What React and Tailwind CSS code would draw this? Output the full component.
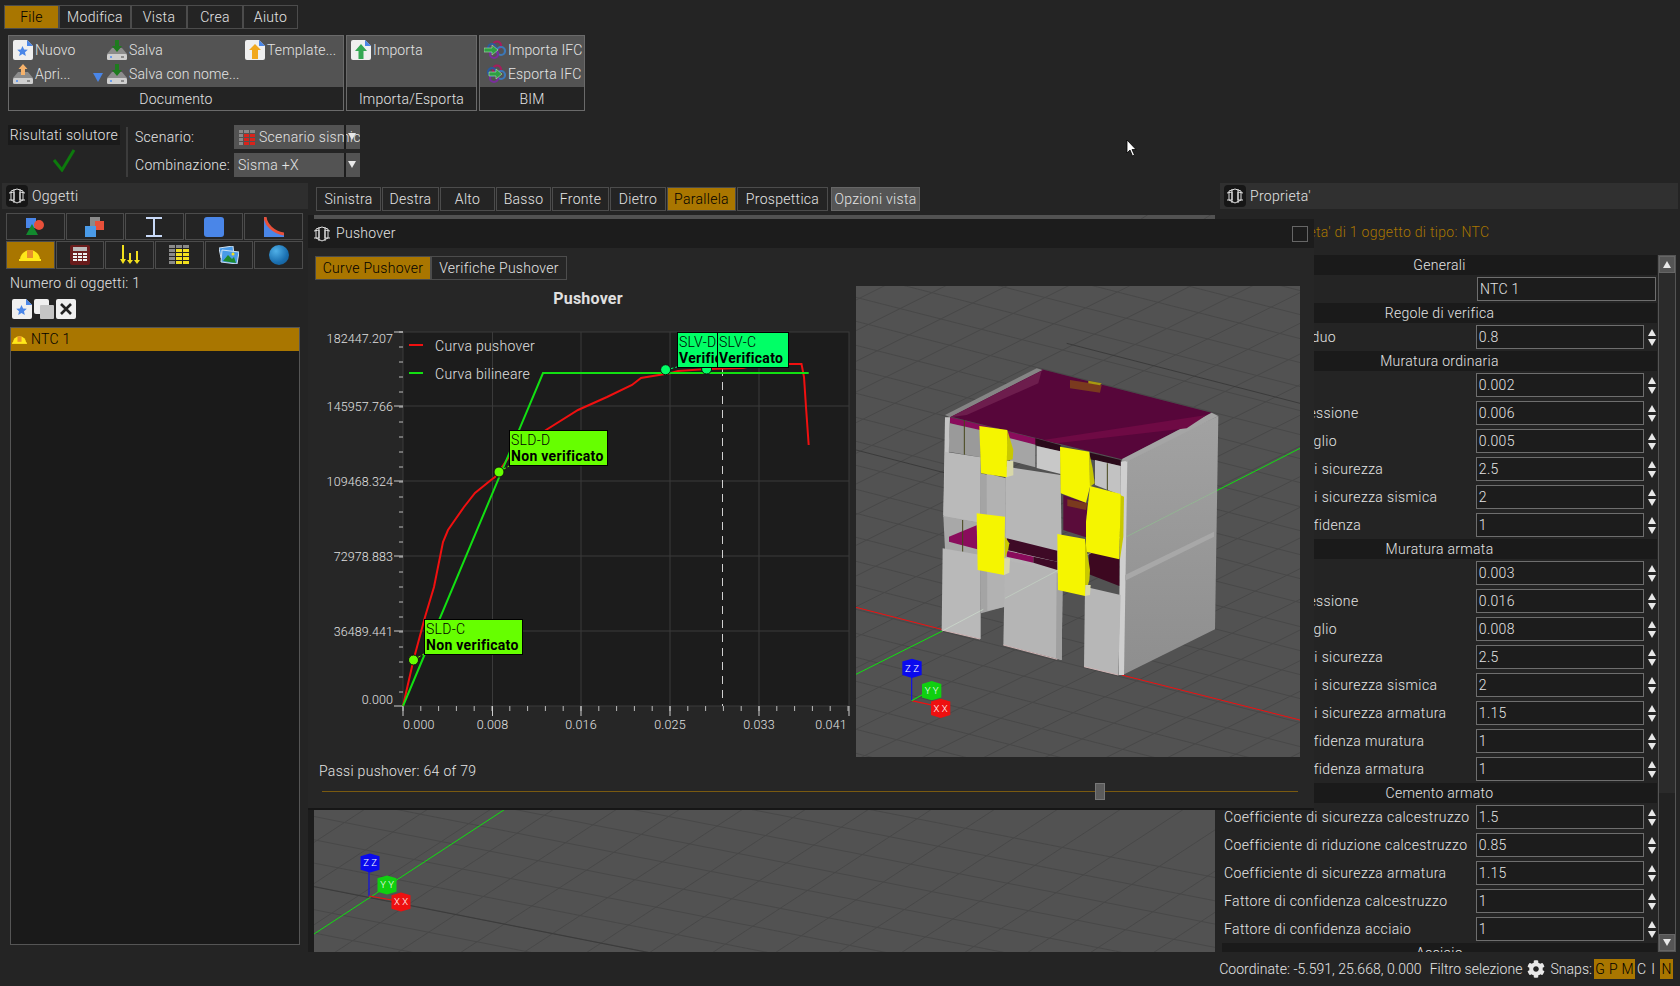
import React from "react";
import { FaCog } from "react-icons/fa";

const amber = "bg-[#a97600]";

const PanelIcon = () => (
  <div className="w-[22px] h-[22px] rounded-[4px] bg-[#161616] flex items-center justify-center shrink-0">
    <svg width="18" height="18" viewBox="0 0 18 18" fill="none" stroke="#e0e0e0" strokeWidth="1">
      <path d="M3 4l6-2 6 2v9l-6 3-6-3z" />
      <path d="M1 6l5-1v8l-5 0M17 6l-5-1v8l5 0M6 2v14M12 2v14" />
    </svg>
  </div>
);

const Doc = ({ children, corner = "#4a86e8" }) => (
  <svg width="20" height="20" viewBox="0 0 20 20" className="shrink-0">
    <path d="M2 0h12l6 6v12a2 2 0 0 1-2 2H2a2 2 0 0 1-2-2V2a2 2 0 0 1 2-2z" fill="#efefef" />
    <path d="M14 0l6 6h-6z" fill={corner} />
    {children}
  </svg>
);

const Drive = ({ arrow, up }) => (
  <svg width="20" height="20" viewBox="0 0 20 20" className="shrink-0">
    <path d="M5 8h10l5 6v4a2 2 0 0 1-2 2H2a2 2 0 0 1-2-2v-4z" fill="#8c8c8c" />
    <rect x="0" y="14" width="20" height="6" rx="1.5" fill="#cfcfcf" />
    <rect x="3" y="16" width="2" height="2" fill="#6d9eeb" />
    <rect x="14" y="16" width="3" height="2" fill="#8a8a8a" />
    {up ? (
      <path d="M10 0l4.5 5H12v6H8V5H5.5z" fill={arrow} />
    ) : (
      <path d="M8 0h4v6h3l-5 6-5-6h3z" fill={arrow} />
    )}
  </svg>
);

const IfcIcon = ({ flip }) => (
  <svg width="22" height="20" viewBox="0 0 22 20" fill="none" className="shrink-0">
    <circle cx="13" cy="5.5" r="4" stroke="#a61c5c" strokeWidth="2.2" />
    <circle cx="17" cy="11" r="4" stroke="#3c78b8" strokeWidth="2.2" />
    <circle cx="10" cy="14" r="4" stroke="#7a2d9c" strokeWidth="2.2" />
    <circle cx="8" cy="8" r="4" stroke="#2a5a9c" strokeWidth="2.2" />
    <path d={flip ? "M5 8h7V5l6 5-6 5v-3H5z" : "M0 8h8V5l6 5-6 5v-3H0z"} fill="#2ea043" stroke="#cfe8cf" strokeWidth=".5" />
  </svg>
);

const Tool = ({ icon, label, w }) => (
  <div className={`flex items-center gap-[2px] h-[24px] tracking-[0.15px] ${w}`}>
    {icon}
    <span className="whitespace-nowrap">{label}</span>
  </div>
);

const Group = ({ title, w, children }) => (
  <div className={`${w} h-[76px] flex flex-col border border-[#6a6a6a] bg-[#535353]`}>
    <div className="h-[54px] relative">{children}</div>
    <div className="flex-1 bg-[#232323] flex items-center justify-center pt-[2px] tracking-[0.2px]">{title}</div>
  </div>
);

const Ribbon = () => (
  <div className="flex gap-[2px] ml-[8px] mt-[6px]">
    <Group title="Documento" w="w-[336px]">
      <div className="flex pl-[4px] pt-[2px]">
        <div className="w-[94px] flex flex-col">
          <Tool
            label="Nuovo"
            icon={
              <Doc>
                <path d="M9.5 6l1.6 3.4 3.7.4-2.8 2.5.8 3.7-3.3-1.9-3.3 1.9.8-3.7-2.8-2.5 3.7-.4z" fill="#4a86e8" />
              </Doc>
            }
          />
          <Tool label="Apri..." icon={<Drive arrow="#f6b26b" up />} />
        </div>
        <div className="w-[138px] flex flex-col">
          <Tool label="Salva" icon={<Drive arrow="#1e7b1e" />} />
          <div className="relative">
            <Tool label="Salva con nome..." icon={<Drive arrow="#1e7b1e" />} />
            <div className="absolute left-[-14px] top-[11px] w-0 h-0 border-l-[5px] border-r-[5px] border-t-[9px] border-l-transparent border-r-transparent border-t-[#4a86e8]" />
          </div>
        </div>
        <Tool
          label="Template..."
          icon={
            <Doc>
              <path d="M10 4l6 6h-3v9H7v-9H4z" fill="#f1a81e" />
            </Doc>
          }
        />
      </div>
    </Group>
    <Group title="Importa/Esporta" w="w-[131px]">
      <div className="pl-[4px] pt-[2px]">
        <Tool
          label="Importa"
          icon={
            <Doc>
              <path d="M10 4l6 7h-3.5v8h-5v-8H4z" fill="#34a853" />
            </Doc>
          }
        />
      </div>
    </Group>
    <Group title="BIM" w="w-[106px]">
      <div className="pl-[4px] pt-[2px]">
        <Tool label="Importa IFC" icon={<IfcIcon />} />
        <Tool label="Esporta IFC" icon={<IfcIcon flip />} />
      </div>
    </Group>
  </div>
);

const Combo = ({ icon, label }) => (
  <div className="relative w-[126px] h-[24px] bg-[#535353] flex items-center overflow-hidden whitespace-nowrap gap-[3px] pl-[4px]">
    {icon}
    {label}
    <div className="absolute left-[110px] top-0 w-[2px] h-full bg-[#1c1c1c]" />
    <div className="absolute left-[114px] top-[8px] w-0 h-0 border-l-[4px] border-r-[4px] border-t-[7px] border-l-transparent border-r-transparent border-t-[#e8e8e8]" />
  </div>
);

const TableIcon = ({ color = "#d8241c" }) => (
  <svg width="18" height="18" viewBox="0 0 18 18" className="shrink-0">
    {[0, 4, 8, 12].map((y) => (
      <g key={y}>
        <rect x="1" y={y + 2} width="4" height="3" fill="#8a8a8a" />
        <rect x="6" y={y + 2} width="5" height="3" fill={y ? color : "#8a8a8a"} />
        <rect x="12" y={y + 2} width="5" height="3" fill={y ? color : "#8a8a8a"} />
      </g>
    ))}
  </svg>
);

const ResultsRow = () => (
  <div className="flex mt-[14px] h-[52px] ml-[8px]">
    <div className="w-[112px] flex flex-col items-center">
      <div className="w-full h-[20px] bg-[#1a1a1a] flex items-center justify-center whitespace-nowrap">Risultati solutore</div>
      <svg width="24" height="24" viewBox="0 0 24 24" className="mt-[3px]" fill="none" stroke="#0d7a0d" strokeWidth="3">
        <path d="M2 12l8 10L22 2" />
      </svg>
    </div>
    <div className="w-[2px] bg-[#3c3c3c] ml-[6px] mr-[7px] mt-[2px]" />
    <div className="flex flex-col gap-[4px]">
      <div className="flex items-center">
        <span className="w-[99px]">Scenario:</span>
        <Combo icon={<TableIcon />} label="Scenario sismico" />
      </div>
      <div className="flex items-center">
        <span className="w-[99px]">Combinazione:</span>
        <Combo label="Sisma +X" />
      </div>
    </div>
  </div>
);

const Header = () => (
  <div className="h-[183px] flex flex-col pt-[5px]">
    <div className="flex ml-[4px] h-[24px]">
      {[
        ["File", "w-[55px]"],
        ["Modifica", "w-[72px]"],
        ["Vista", "w-[56px]"],
        ["Crea", "w-[56px]"],
        ["Aiuto", "w-[55px]"],
      ].map(([t, w], i) => (
        <div
          key={t}
          className={`${w} flex items-center justify-center border border-[#4c4c4c] ${i === 0 ? `${amber} text-black` : ""}`}
        >
          {t}
        </div>
      ))}
    </div>
    <Ribbon />
    <ResultsRow />
  </div>
);

const HardHat = ({ w = 22 }) => (
  <svg width={w} height={(w * 14) / 22} viewBox="0 0 22 14">
    <path d="M1 12a10 10 0 0 1 20 0z" fill="#ffe81a" />
    <rect x="8" y="2" width="6" height="8" fill="#e8912a" />
    <rect x="0" y="11" width="22" height="2" fill="#ffe81a" />
  </svg>
);

const TopIcons = [
  <svg key="a" width="20" height="20" viewBox="0 0 20 20">
    <rect x="1" y="1" width="10" height="10" fill="#4a86e8" />
    <circle cx="14" cy="8" r="5" fill="#e8503a" />
    <path d="M7 7l6 11H1z" fill="#128a2e" />
  </svg>,
  <svg key="b" width="22" height="22" viewBox="0 0 22 22">
    <rect x="6" y="1" width="10" height="10" fill="#8a8a8a" />
    <rect x="11" y="5" width="9" height="9" fill="#e8503a" />
    <rect x="1" y="10" width="11" height="11" fill="#4a9be8" />
  </svg>,
  <svg key="c" width="18" height="22" viewBox="0 0 18 22" fill="none" stroke="#c9daf8" strokeWidth="2">
    <path d="M1 2h16M1 20h16M9 2v18" />
  </svg>,
  <div key="d" className="w-[20px] h-[20px] rounded-[3px] bg-[#4a86e8]" />,
  <svg key="e" width="20" height="20" viewBox="0 0 20 20">
    <path d="M0 0v20h20v-3C10 16 4 10 2 0z" fill="#4a86e8" />
    <path d="M1 0c1 8 8 15 19 17" fill="none" stroke="#e8503a" strokeWidth="3" />
  </svg>,
];

const BottomIcons = [
  <HardHat key="a" />,
  <svg key="b" width="20" height="20" viewBox="0 0 20 20">
    <rect width="20" height="20" rx="2" fill="#6a1c1c" />
    <rect x="3" y="2" width="14" height="4" fill="#bbb" />
    {[8, 11, 14].map((y) =>
      [3, 8, 13].map((x) => <rect key={`${x}${y}`} x={x} y={y} width="4" height="2" fill="#eee" />)
    )}
  </svg>,
  <svg key="c" width="20" height="20" viewBox="0 0 20 20" fill="none" stroke="#f2e01e" strokeWidth="2">
    <path d="M3 0v16M10 8v9M17 6v11" />
    <path d="M0 14l3 5 3-5zM7 15l3 4 3-4zM14 15l3 4 3-4z" fill="#f2e01e" stroke="none" />
  </svg>,
  <svg key="d" width="20" height="20" viewBox="0 0 20 20">
    {[0, 4, 8, 12, 16].map((y) => (
      <g key={y}>
        <rect x="0" y={y} width="6" height="3" fill="#8a8a8a" />
        <rect x="7" y={y} width="6" height="3" fill={y > 2 ? "#f2e01e" : "#8a8a8a"} />
        <rect x="14" y={y} width="6" height="3" fill={y > 2 ? "#f2e01e" : "#8a8a8a"} />
      </g>
    ))}
  </svg>,
  <svg key="e" width="20" height="18" viewBox="0 0 20 18">
    <path d="M0 2l14-2 1 10-13 2z" fill="#4a9be8" stroke="#cfe2f3" />
    <path d="M3 4l17 2-2 12-16-2z" fill="#4a9be8" stroke="#cfe2f3" />
    <path d="M4 15l5-6 4 4 2-2 2 6z" fill="#1e8a2e" />
    <circle cx="14" cy="8" r="1.5" fill="#f2e01e" />
  </svg>,
  <div
    key="f"
    className="w-[20px] h-[20px] rounded-full bg-[radial-gradient(circle_at_35%_30%,#4fb0e8,#1a6fb0_60%,#12558a)]"
  />,
];

const LeftPanel = () => (
  <div className="w-[306px] ml-[2px] flex flex-col">
    <div className="h-[26px] bg-[#2e2e2e] flex items-center gap-[4px] pl-[4px]">
      <PanelIcon />
      Oggetti
    </div>
    <div className="flex gap-px mt-[4px] ml-[4px] h-[27px] w-[297px]">
      {TopIcons.map((ic, i) => (
        <div key={i} className="flex-1 border border-[#4c4c4c] flex items-center justify-center">
          {ic}
        </div>
      ))}
    </div>
    <div className="flex gap-px mt-px ml-[4px] h-[28px] w-[297px]">
      {BottomIcons.map((ic, i) => (
        <div
          key={i}
          className={`flex-1 border border-[#4c4c4c] flex items-center justify-center ${i === 0 ? amber : ""}`}
        >
          {ic}
        </div>
      ))}
    </div>
    <div className="h-[20px] mt-[4px] ml-[8px] flex items-center">Numero di oggetti: 1</div>
    <div className="flex gap-[2px] mt-[6px] ml-[10px]">
      <Doc>
        <path d="M9.5 6l1.6 3.4 3.7.4-2.8 2.5.8 3.7-3.3-1.9-3.3 1.9.8-3.7-2.8-2.5 3.7-.4z" fill="#4a86e8" />
      </Doc>
      <div className="w-[20px] h-[20px] relative">
        <div className="absolute left-0 top-0 w-[15px] h-[15px] rounded-[2px] bg-[#efefef]" />
        <div className="absolute left-[6px] top-[6px] w-[14px] h-[14px] rounded-[1px] bg-[#c4c4c4]" />
      </div>
      <div className="w-[20px] h-[20px] rounded-[2px] bg-[#efefef] flex items-center justify-center">
        <svg width="14" height="14" viewBox="0 0 14 14" stroke="#222" strokeWidth="2.6">
          <path d="M2 2l10 10M12 2L2 12" />
        </svg>
      </div>
    </div>
    <div className="mt-[8px] ml-[8px] w-[290px] h-[618px] border border-[#555] bg-[#1a1a1a]">
      <div className={`${amber} h-[23px] flex items-center gap-[4px] text-black pl-px`}>
        <HardHat w={15} />
        NTC 1
      </div>
    </div>
  </div>
);

const Gizmo = ({ x, y, fill, letter, s = 9.5 }) => (
  <g>
    <polygon
      points={`${x - s},${y - s * 0.7} ${x},${y - s} ${x + s},${y - s * 0.7} ${x + s},${y + s * 0.7} ${x},${y + s} ${x - s},${y + s * 0.7}`}
      fill={fill}
    />
    <text
      x={x}
      y={y + s * 0.35}
      textAnchor="middle"
      fontSize={s}
      fill="#fff"
      fontFamily="Roboto, sans-serif"
      fontWeight="300"
      letterSpacing="0"
    >
      {letter} {letter}
    </text>
  </g>
);

// righe di griglia su un rettangolo: famiglie parallele con pendenza fissa
const gridLines = (x0, x1, slope, yAtX0, step, count) =>
  Array.from({ length: count }, (_, i) => {
    const y = yAtX0 + i * step;
    return { x1: x0, y1: y, x2: x1, y2: y + (x1 - x0) * slope };
  });

const Viewport = () => (
  <svg viewBox="314 215 901 737" width="901" height="737" className="block bg-[#525252]">
    {gridLines(314, 1215, 0.197, 700, 23.3, 14).map((l, i) => (
      <line key={i} {...l} stroke="#484848" />
    ))}
    {gridLines(314, 1215, -0.654, 760, 41.2, 30).map((l, i) => (
      <line key={i} {...l} stroke="#484848" />
    ))}
    <line x1="314" y1="886.7" x2="1215" y2="1064" stroke="#3b3b3b" />
    <line x1="314" y1="934" x2="640" y2="721" stroke="#10e010" />
    <line x1="369" y1="896" x2="369" y2="870" stroke="#1010e8" strokeWidth="1.2" />
    <line x1="369" y1="896" x2="392" y2="900" stroke="#f01010" strokeWidth="1.2" />
    <Gizmo x={370} y={863} fill="#0a0aee" letter="Z" />
    <Gizmo x={387} y={885} fill="#10d010" letter="Y" />
    <Gizmo x={401} y={902} fill="#ee1010" letter="X" />
  </svg>
);

const CenterPanel = () => (
  <div className="w-[907px] flex flex-col">
    <div className="flex gap-px pt-[4px] pl-[8px] h-[28px]">
      {[
        ["Sinistra", "w-[65px]"],
        ["Destra", "w-[57px]"],
        ["Alto", "w-[55px]"],
        ["Basso", "w-[55px]"],
        ["Fronte", "w-[57px]"],
        ["Dietro", "w-[56px]"],
        ["Parallela", "w-[69px]"],
        ["Prospettica", "w-[91px]"],
      ].map(([t, w]) => (
        <div
          key={t}
          className={`${w} flex items-center justify-center border border-[#4c4c4c] ${t === "Parallela" ? `${amber} text-black` : ""}`}
        >
          {t}
        </div>
      ))}
      <div className="w-[89px] ml-[2px] bg-[#555] border border-[#666] flex items-center justify-center">Opzioni vista</div>
    </div>
    <div className="flex-1 mt-[4px] flex bg-[#1c1c1c] pl-[6px]">
      <Viewport />
    </div>
  </div>
);

const sections = [
  { title: "Generali", rows: [["Nome", "NTC 1", true]] },
  { title: "Regole di verifica", rows: [["Rapporto residuo", "0.8"]] },
  {
    title: "Muratura ordinaria",
    rows: [
      ["Drift", "0.002"],
      ["Drift pressoflessione", "0.006"],
      ["Drift ultimo taglio", "0.005"],
      ["Coefficiente di sicurezza", "2.5"],
      ["Coefficiente di sicurezza sismica", "2"],
      ["Fattore di confidenza", "1"],
    ],
  },
  {
    title: "Muratura armata",
    rows: [
      ["Drift", "0.003"],
      ["Drift pressoflessione", "0.016"],
      ["Drift ultimo taglio", "0.008"],
      ["Coefficiente di sicurezza", "2.5"],
      ["Coefficiente di sicurezza sismica", "2"],
      ["Coefficiente di sicurezza armatura", "1.15"],
      ["Fattore di confidenza muratura", "1"],
      ["Fattore di confidenza armatura", "1"],
    ],
  },
  {
    title: "Cemento armato",
    rows: [
      ["Coefficiente di sicurezza calcestruzzo", "1.5"],
      ["Coefficiente di riduzione calcestruzzo", "0.85"],
      ["Coefficiente di sicurezza armatura", "1.15"],
      ["Fattore di confidenza calcestruzzo", "1"],
      ["Fattore di confidenza acciaio", "1"],
    ],
  },
  { title: "Acciaio", rows: [] },
];

const Spinner = () => (
  <div className="w-[11px] flex flex-col items-center gap-[3px] ml-[2px]">
    <div className="w-0 h-0 border-l-[4px] border-r-[4px] border-b-[7px] border-l-transparent border-r-transparent border-b-[#e8e8e8]" />
    <div className="w-0 h-0 border-l-[4px] border-r-[4px] border-t-[7px] border-l-transparent border-r-transparent border-t-[#e8e8e8]" />
  </div>
);

const PropRow = ({ label, value, plain }) => (
  <div className="h-[28px] flex items-center shrink-0">
    <div className="w-[255px] pl-[2px] whitespace-nowrap overflow-hidden tracking-[0.39px]">{label}</div>
    <div
      className={`${plain ? "w-[179px]" : "w-[169px]"} h-[24px] border border-[#6e6e6e] bg-[#1c1c1c] flex items-center pl-[2px]`}
    >
      {value}
    </div>
    {!plain && <Spinner />}
  </div>
);

const ScrollButton = ({ up }) => (
  <div className="h-[17px] bg-[#555] border border-[#666] flex items-center justify-center shrink-0">
    <div
      className={
        up
          ? "w-0 h-0 border-l-[4px] border-r-[4px] border-b-[7px] border-l-transparent border-r-transparent border-b-[#e8e8e8]"
          : "w-0 h-0 border-l-[4px] border-r-[4px] border-t-[7px] border-l-transparent border-r-transparent border-t-[#e8e8e8]"
      }
    />
  </div>
);

const RightPanel = () => (
  <div className="w-[458px] ml-[5px] flex flex-col">
    <div className="h-[26px] bg-[#303030] flex items-center gap-[4px] pl-[4px]">
      <PanelIcon />
      Proprieta'
    </div>
    <div className="h-[46px] flex items-center pl-[50px] text-[#a97600] whitespace-nowrap">
      Proprieta' di 1 oggetto di tipo: NTC
    </div>
    <div className="flex h-[697px] overflow-hidden">
      <div className="w-[435px] ml-[2px] flex flex-col overflow-hidden">
        {sections.map((s) => (
          <div key={s.title} className="flex flex-col shrink-0">
            <div className="h-[20px] bg-[#1a1a1a] flex items-center justify-center">{s.title}</div>
            {s.rows.map(([l, v, plain]) => (
              <PropRow key={l} label={l} value={v} plain={plain} />
            ))}
          </div>
        ))}
      </div>
      <div className="w-[18px] ml-px flex flex-col border border-[#555]">
        <ScrollButton up />
        <div className="h-[520px] bg-[#2b2b2b]" />
        <div className="flex-1 bg-[#222]" />
        <ScrollButton />
      </div>
    </div>
  </div>
);

const yLabels = [
  ["182447.207", 338],
  ["145957.766", 406],
  ["109468.324", 481],
  ["72978.883", 556],
  ["36489.441", 631],
  ["0.000", 699],
];

const xGrid = [492.5, 581, 670, 759];
const yGrid = [406, 481, 556, 631];

const redCurve =
  "403,706 413.5,660 425,617 434,587 443,542 448,530 453.5,522 464,507 475,493 491,480 495,477 509,457 546,430 578,410 607,397 632,385 641,378 671,373 678,371 707,369 743,368 760,364 789,364 801.5,364 804,377 806,407 808.7,445";

const Callout = ({ left, top, width, bg, title, status }) => (
  <div
    style={{ left: left - 316, top: top - 286, width }}
    className={`absolute h-[36px] border border-black ${bg} text-black leading-[16px] pl-[1px] overflow-hidden whitespace-nowrap flex flex-col justify-center`}
  >
    <span>{title}</span>
    <span className="font-bold">{status}</span>
  </div>
);

const Chart = () => {
  const minorY = [];
  for (let y = 332; y <= 706; y += 15) minorY.push(y);
  const minorX = [];
  for (let x = 403; x <= 849; x += 17.8) minorX.push(x);
  return (
    <div className="w-[540px] h-[471px] relative shrink-0">
      <svg viewBox="316 286 540 471" width="540" height="471" className="block">
        <text x="588" y="304" textAnchor="middle" fontSize="16" fontWeight="700" fill="#e0e0e0" letterSpacing=".2">
          Pushover
        </text>
        <rect x="403" y="332" width="446" height="374" fill="#1c1c1c" stroke="#3a3a3a" />
        {xGrid.map((x) => (
          <line key={x} x1={x} x2={x} y1="332" y2="706" stroke="#3a3a3a" />
        ))}
        {yGrid.map((y) => (
          <line key={y} x1="403" x2="849" y1={y} y2={y} stroke="#3a3a3a" />
        ))}
        {minorY.map((y) => (
          <line key={y} x1="399" x2="403" y1={y} y2={y} stroke="#bbb" />
        ))}
        {[332, 406, 481, 556, 631, 706].map((y) => (
          <line key={y} x1="394" x2="403" y1={y} y2={y} stroke="#ccc" />
        ))}
        {minorX.map((x) => (
          <line key={x} x1={x} x2={x} y1="706" y2="711" stroke="#bbb" />
        ))}
        {[403, 492.5, 581, 670, 759, 849].map((x) => (
          <line key={x} x1={x} x2={x} y1="706" y2="716" stroke="#ccc" />
        ))}
        {yLabels.map(([t, y]) => (
          <text key={t} x="393" y={y + 5} textAnchor="end" fontSize="12.5" fontWeight="300" fill="#e0e0e0" letterSpacing=".1">
            {t}
          </text>
        ))}
        {[
          ["0.000", 403, "start"],
          ["0.008", 492.5, "middle"],
          ["0.016", 581, "middle"],
          ["0.025", 670, "middle"],
          ["0.033", 759, "middle"],
          ["0.041", 847, "end"],
        ].map(([t, x, a]) => (
          <text key={t} x={x} y="729" textAnchor={a} fontSize="12.5" fontWeight="300" fill="#e0e0e0" letterSpacing=".2">
            {t}
          </text>
        ))}
        <line x1="722.5" x2="722.5" y1="368" y2="706" stroke="#d0d0d0" strokeDasharray="8 6" />
        <polyline points={redCurve} fill="none" stroke="#f01010" strokeWidth="2" />
        <polyline points="403,706 543,373 808.7,373" fill="none" stroke="#12e012" strokeWidth="2" />
        <line x1="409" x2="423" y1="345" y2="345" stroke="#f01010" strokeWidth="2" />
        <line x1="409" x2="423" y1="373" y2="373" stroke="#12e012" strokeWidth="2" />
        <text x="435" y="351" fontSize="14" fontWeight="300" fill="#e0e0e0">
          Curva pushover
        </text>
        <text x="435" y="379" fontSize="14" fontWeight="300" fill="#e0e0e0">
          Curva bilineare
        </text>
        <line x1="413.5" y1="660" x2="424" y2="654" stroke="#66ff00" strokeDasharray="3 2" />
        <line x1="499" y1="472" x2="509" y2="466" stroke="#66ff00" strokeDasharray="3 2" />
        <line x1="665.6" y1="370" x2="677" y2="367" stroke="#00ff66" strokeDasharray="3 2" />
        {[
          [413.5, 660, "#66ff00"],
          [499, 472, "#66ff00"],
          [665.6, 369.7, "#00ff66"],
          [706.6, 369, "#00ff66"],
        ].map(([x, y, c]) => (
          <circle key={x} cx={x} cy={y} r="5" fill={c} stroke="#111" />
        ))}
      </svg>
      <Callout left={424} top={619} width={99} bg="bg-[#66ff00]" title="SLD-C" status="Non verificato" />
      <Callout left={509} top={430} width={99} bg="bg-[#66ff00]" title="SLD-D" status="Non verificato" />
      <Callout left={677} top={332} width={41} bg="bg-[#00ff66]" title="SLV-D" status="Verificato" />
      <Callout left={717} top={332} width={72} bg="bg-[#00ff66]" title="SLV-C" status="Verificato" />
    </div>
  );
};

const Building3D = () => (
  <svg viewBox="18 -162 1332 1413" width="444" height="471" className="block bg-[#525252] shrink-0">
    <defs>
      <linearGradient id="wall" x1="0" y1="0" x2="0" y2="1">
        <stop offset="0" stopColor="#a2a2a2" />
        <stop offset="1" stopColor="#8e8e8e" />
      </linearGradient>
    </defs>
    {gridLines(18, 1350, 0.255, -560, 72, 30).map((l, i) => (
      <line key={i} {...l} stroke="#484848" strokeWidth="3" />
    ))}
    {gridLines(18, 1350, -0.5, -120, 92, 28).map((l, i) => (
      <line key={i} {...l} stroke="#484848" strokeWidth="3" />
    ))}
    <line x1="18" y1="330" x2="290" y2="400" stroke="#3b3b3b" strokeWidth="3" />
    <line x1="650" y1="10" x2="1350" y2="190" stroke="#3b3b3b" strokeWidth="3" />
    <line x1="18" y1="802" x2="275" y2="868" stroke="#f01010" strokeWidth="3" />
    <line x1="815" y1="1005" x2="1350" y2="1140" stroke="#f01010" strokeWidth="3" />
    <line x1="18" y1="1003" x2="277" y2="873" stroke="#10e010" strokeWidth="3" />
    <line x1="1100" y1="452" x2="1350" y2="325" stroke="#10e010" strokeWidth="3" />

    {/* parete destra */}
    <polygon points="815,360 1105,228 1095,868 818,1005" fill="url(#wall)" />
    <polygon points="812,365 832,362 822,1005 806,1005" fill="#cfcfcf" />
    <polygon points="825,705 1092,575 1092,590 825,722" fill="#a8a8a8" />
    <line x1="830" y1="590" x2="1100" y2="452" stroke="#8fc08f" strokeWidth="2" />
    {/* copertura */}
    <polygon points="295,228 575,88 1085,218 815,358" fill="#57063a" />
    <polygon points="285,225 560,85 578,90 300,232" fill="#858585" />
    <polygon points="815,358 1085,218 1105,228 830,365" fill="#a5a5a5" />
    <polygon points="300,232 575,92 565,130 350,225" fill="#6d1d4d" />
    <polygon points="580,300 1070,225 1010,265 620,310" fill="#6e0a44" />
    <polygon points="660,120 755,135 750,158 660,145" fill="#7a3a1e" />
    <polygon points="715,122 755,130 750,136 715,130" fill="#a89a10" />
    {/* fascia superiore e finestre */}
    <polygon points="300,232 560,296 560,316 300,250" fill="#8a0c5c" />
    <polygon points="556,295 632,316 632,335 556,316" fill="#2a0a1a" />
    <polygon points="720,338 812,360 812,378 720,358" fill="#2a0a1a" />
    <polygon points="300,250 390,270 392,352 295,335" fill="#9a9a9a" />
    <polygon points="480,295 556,314 556,382 480,362" fill="#a5a5a5" />
    <polygon points="560,318 632,334 632,402 560,384" fill="#c8c8c8" />
    <polygon points="735,360 812,378 812,465 735,435" fill="#c2c2c2" />
    <line x1="343" y1="240" x2="343" y2="345" stroke="#45451a" strokeWidth="3" />
    <line x1="772" y1="370" x2="772" y2="450" stroke="#45451a" strokeWidth="3" />
    {/* maschi murari */}
    <polygon points="285,232 300,232 290,530 280,525" fill="#c4c4c4" />
    <polygon points="285,335 392,352 392,550 280,530" fill="#bababa" />
    <polygon points="390,400 467,415 465,800 393,820" fill="#a4a4a4" />
    <polygon points="410,400 467,415 465,800 412,812" fill="#b2b2b2" />
    <polygon points="467,380 632,405 636,720 465,680" fill="#b7b7b7" />
    <polygon points="640,465 712,490 708,592 640,570" fill="#5a0c3a" />
    <polygon points="652,478 712,490 708,510 652,498" fill="#7a3a1e" />
    <polygon points="280,528 392,548 392,650 285,628" fill="#a8a8a8" />
    <polygon points="297,590 380,556 382,628 297,605" fill="#8a0c5c" />
    <line x1="338" y1="540" x2="338" y2="635" stroke="#45451a" strokeWidth="3" />
    <polygon points="470,595 622,632 622,665 470,630" fill="#3e0a26" />
    <polygon points="470,632 550,650 550,668 470,650" fill="#8a0c5c" />
    <polygon points="550,650 622,665 622,690 550,668" fill="#3e0a26" />
    <polygon points="718,635 808,655 808,738 715,702" fill="#3d0820" />
    <polygon points="278,625 392,645 392,897 275,870" fill="#b9b9b9" />
    <polygon points="465,660 638,700 635,960 460,915" fill="#b5b5b5" />
    <polygon points="620,700 638,700 635,960 618,955" fill="#a0a0a0" />
    <polygon points="705,740 812,765 805,1005 702,980" fill="#b7b7b7" />
    <line x1="275" y1="870" x2="390" y2="897" stroke="#d0b4b4" strokeWidth="3" />
    <line x1="460" y1="915" x2="622" y2="958" stroke="#d0b4b4" strokeWidth="3" />
    <line x1="702" y1="980" x2="805" y2="1005" stroke="#d0b4b4" strokeWidth="3" />
    <line x1="277" y1="873" x2="400" y2="808" stroke="#cfe0cf" strokeWidth="2" />
    <line x1="465" y1="775" x2="815" y2="590" stroke="#c4d4c4" strokeWidth="2" />
    {/* pannelli gialli */}
    <polygon points="472,270 490,330 488,358 470,362" fill="#c8c800" />
    <polygon points="470,362 490,362 490,406 468,412" fill="#d8d8a8" />
    <polygon points="388,258 472,270 470,412 393,400" fill="#f5f500" />
    <polygon points="465,590 478,610 475,628 465,655" fill="#c8c800" />
    <polygon points="462,655 480,655 478,698 462,705" fill="#d8d8a8" />
    <polygon points="380,520 465,530 462,705 383,690" fill="#f5f500" />
    <polygon points="718,340 728,385 734,430 720,440" fill="#c8c800" />
    <polygon points="630,320 718,335 720,440 708,488 632,460" fill="#f5f500" />
    <polygon points="810,465 822,470 820,590 810,658" fill="#c8c800" />
    <polygon points="720,438 812,462 808,658 708,635 708,545" fill="#f5f500" />
    <polygon points="705,597 720,690 718,720 705,768" fill="#c8c800" />
    <polygon points="706,735 722,735 720,765 705,768" fill="#d8d8a8" />
    <polygon points="622,582 705,597 705,768 624,750" fill="#f5f500" />

    <line x1="185" y1="1082" x2="185" y2="1010" stroke="#1010e8" strokeWidth="3.5" />
    <line x1="185" y1="1082" x2="250" y2="1096" stroke="#f01010" strokeWidth="3.5" />
    <line x1="185" y1="1082" x2="225" y2="1060" stroke="#10e010" strokeWidth="3.5" />
    <Gizmo x={186} y={985} fill="#0a0aee" letter="Z" s={29} />
    <Gizmo x={245} y={1052} fill="#10d010" letter="Y" s={29} />
    <Gizmo x={272} y={1105} fill="#ee1010" letter="X" s={29} />
  </svg>
);

const PushoverDialog = () => (
  <div className="absolute left-[308px] top-[219px] w-[1006px] h-[591px] bg-[#262626] flex flex-col border-b-2 border-[#161616]">
    <div className="h-[29px] bg-[#1c1c1c] flex items-center pl-[5px] gap-[5px] shrink-0">
      <svg width="18" height="18" viewBox="0 0 18 18" fill="none" stroke="#e0e0e0" strokeWidth="1">
        <path d="M3 4l6-2 6 2v9l-6 3-6-3z" />
        <path d="M1 6l5-1v8l-5 0M17 6l-5-1v8l5 0M6 2v14M12 2v14" />
      </svg>
      Pushover
      <div className="ml-auto mr-[6px] w-[16px] h-[16px] border border-[#666]" />
    </div>
    <div className="flex ml-[7px] mt-[8px] h-[24px] shrink-0">
      <div className={`w-[116px] ${amber} text-black border border-[#4c4c4c] flex items-center justify-center`}>Curve Pushover</div>
      <div className="w-[136px] border border-[#4c4c4c] flex items-center justify-center">Verifiche Pushover</div>
    </div>
    <div className="flex ml-[8px] mt-[6px]">
      <Chart />
      <Building3D />
    </div>
    <div className="ml-[11px] mt-[4px] h-[20px] flex items-center">Passi pushover: 64 of 79</div>
    <div className="relative ml-[14px] w-[976px] h-[16px] mt-[2px] flex items-center">
      <div className="w-full h-px bg-[#7a5a10]" />
      <div className="absolute left-[773px] top-0 w-[10px] h-[17px] bg-[#5c5c5c] border border-[#777]" />
    </div>
  </div>
);

const StatusBar = () => (
  <div className="h-[34px] flex items-center justify-end pr-[7px] whitespace-nowrap tracking-[0.05px]">
    <span>Coordinate: -5.591, 25.668, 0.000</span>
    <span className="ml-[8px]">Filtro selezione</span>
    <FaCog className="ml-[5px] w-[18px] h-[18px] text-[#e8e8e8]" />
    <span className="ml-[5px]">Snaps:</span>
    <span className={`ml-[2px] h-[20px] w-[41px] ${amber} text-black flex items-center justify-center gap-[4px]`}>
      <span>G</span>
      <span>P</span>
      <span>M</span>
    </span>
    <span className="ml-[2px]">C</span>
    <span className="ml-[5px]">I</span>
    <span className={`ml-[5px] h-[20px] w-[13px] ${amber} text-black flex items-center justify-center`}>N</span>
  </div>
);

export default function App() {
  return (
    <div className="relative w-[1680px] h-[986px] overflow-hidden bg-[#242424] text-[#e4e4e4] text-[14px] font-light tracking-[0.3px] [font-family:Roboto,sans-serif] flex flex-col">
      <Header />
      <div className="flex h-[769px]">
        <LeftPanel />
        <CenterPanel />
        <RightPanel />
      </div>
      <StatusBar />
      <PushoverDialog />
      <svg className="absolute left-[1126px] top-[139px]" width="11" height="18" viewBox="0 0 11 18">
        <path d="M1 1v13l3-3 2.5 6 2-1-2.5-5.5H10z" fill="#fff" stroke="#000" strokeWidth=".8" />
      </svg>
    </div>
  );
}
